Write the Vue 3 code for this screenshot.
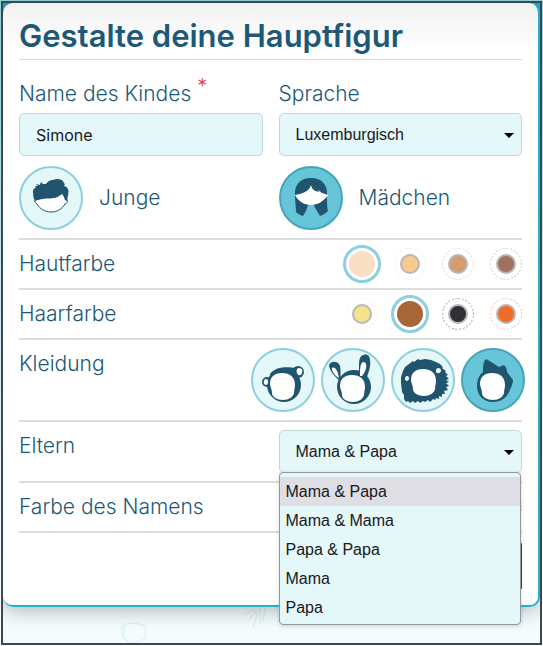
<script setup>
import { ref } from 'vue'

const childName = ref('Simone')
const language = ref('Luxemburgisch')
const figure = ref('girl')
const outfit = ref('flame')
const parents = ref('Mama & Papa')
const parentOptions = ['Mama & Papa', 'Mama & Mama', 'Papa & Papa', 'Mama', 'Papa']

const skin = ref('hell')
const hair = ref('braun')
const nameColor = ref('blau')

const skinColors = [
  { id: 'hell', color: '#f8dfc5' },
  { id: 'beige', color: '#f8ca8f' },
  { id: 'mittel', color: '#d59c71' },
  { id: 'dunkel', color: '#a0705e' }
]
const hairColors = [
  { id: 'blond', color: '#f5e38b' },
  { id: 'braun', color: '#a66635' },
  { id: 'schwarz', color: '#2e3036' },
  { id: 'rot', color: '#f16b29' }
]
const nameColors = [
  { id: 'blau', color: '#2a7fb8' },
  { id: 'gruen', color: '#6bb344' },
  { id: 'rot', color: '#f16b29' }
]

const face = 'M31 25C23 25 19 29 19 36C19 39 21 41 21 45C21 49 26 52 32 52C38 52 42 49 43 45C43 42 44 40 44 37C44 29 39 25 31 25z'
const outfits = [
  {
    id: 'monkey',
    label: 'Affe',
    dark: ['M16 37a17 17 0 0 1 34 0a17 17 0 0 1-34 0z', 'M41 24a6 6 0 0 1 12 0a6 6 0 0 1-12 0z', 'M11 34a5 5 0 0 1 10 0a5 5 0 0 1-10 0z', 'M19 26c6-8 18-7 25-6l4 10-28 4z'],
    light: 'M48 20c3 0 4 3 3 5-1 3-4 3-5 0-1-2 0-5 2-5zM15 31c2 0 2 2 2 3 0 2-1 3-2 3-3 0-3-6 0-6z',
    shift: ''
  },
  {
    id: 'bunny',
    label: 'Hase',
    dark: ['M16 39a17 17 0 0 1 34 0a17 17 0 0 1-34 0z', 'M19 33C14 29 8 22 8 17C9 13 17 12 19 18C20 22 19 27 20 31z', 'M37 26C39 21 37 15 39 10C41 5 49 5 49 12C50 18 48 23 46 29z'],
    light: 'M11 20C14 18 17 23 18 30C14 28 10 22 11 20zM39 28C39 22 39 15 42 14C47 13 46 23 41 28z',
    shift: 'translate(0 2)'
  },
  {
    id: 'lion',
    label: 'Löwe',
    dark: ['M10 35L10 29L12 23L14 19L18 16L22 13L23 14L27 11L29 12L34 11L40 12L45 14L49 16L52 19L51 20L55 23L54 24L57 27L55 28L58 31L55 32L58 34L55 35L58 38L55 39L57 42L53 43L54 46L51 46L51 49L48 48L48 51L45 50L44 52L42 51L39 54L37 52L34 54L32 53L29 55L27 53L24 55L22 53L19 55L17 53L15 54L13 51L13 47L11 44z'],
    light: 'M16 28c2 0 2 2 2 3-1 3-4 2-4 0 0-2 1-3 2-3zM47 20c2 0 3 1 3 3-1 3-5 3-5 0 0-2 1-3 2-3z',
    shift: 'translate(1 -4)'
  },
  {
    id: 'flame',
    label: 'Flamme',
    dark: ['M16 38c0-6 2-11 6-14 0-5 0-9 2-12 1-1 2-1 3 0l11 7 5-2c2 2 3 4 3 7l6 8c0 4-2 7-3 10-3 8-9 12-17 12-10 0-16-7-16-16z'],
    light: '',
    shift: ''
  }
]
</script>

<template>
  <div class="page">
    <main class="frame">
      <form class="card" @submit.prevent>
        <h1>Gestalte deine Hauptfigur</h1>

        <div class="columns fields">
          <div class="field">
            <label for="child-name">Name des Kindes <sup>*</sup></label>
            <input id="child-name" v-model="childName" class="control text" type="text" required />
          </div>
          <div class="field">
            <label for="language">Sprache</label>
            <div class="select-box">
              <select id="language" v-model="language" class="control">
                <option>Luxemburgisch</option>
                <option>Deutsch</option>
              </select>
              <svg class="arrow" viewBox="0 0 10 5" aria-hidden="true"><path d="M0 0h10L5 5z" /></svg>
            </div>
          </div>
        </div>

        <div class="columns figures">
          <label class="figure">
            <span class="badge" :class="{ chosen: figure === 'boy' }">
              <input v-model="figure" type="radio" name="figure" value="boy" />
              <svg viewBox="0 0 64 64" aria-hidden="true">
                <path class="face outline" d="M16 34c-1 2 1 3 2 4 3 5 8 8 14 8s11-3 14-8c2-1 3-2 2-4L44 25 20 28z" />
                <path class="dark" d="M16 35c-2-3-2-7-2-11l3-3-1-1 3 0-2-2 4 1 1-3 2 2 3 0c1-2 4-4 7-4 4-2 10-1 11 3 1 1 1 2 0 3 5 1 5 6 4 9l-1 6-2-1c-1-2-1-4-3-6-3 2-5 4-9 4-3 1-6 0-10 1-3 0-5 1-8 2z" />
              </svg>
            </span>
            <span>Junge</span>
          </label>
          <label class="figure">
            <span class="badge" :class="{ chosen: figure === 'girl' }">
              <input v-model="figure" type="radio" name="figure" value="girl" />
              <svg viewBox="0 0 64 64" aria-hidden="true">
                <path class="dark" d="M16 30c-1-11 5-18 16-18s17 7 16 18c0 7 0 11 1 15-2 2-5 4-8 5-2-4-5-7-6-11h-6c-1 4-3 8-5 11-3-1-5-2-7-4 0-5-1-10-1-16z" />
                <path class="face" d="M16 29c6-1 14-3 16-10 1 5 4 6 8 7l-1-2 4 3c2 1 4 1 6 2-4 6-10 10-17 10s-13-4-16-10z" />
                <path class="neck" d="M30 40h4c0 3 1 5 2 7h-7c1-2 1-4 1-7z" />
              </svg>
            </span>
            <span>Mädchen</span>
          </label>
        </div>

        <div class="row" role="radiogroup" aria-label="Hautfarbe">
          <span class="name">Hautfarbe</span>
          <div class="swatches">
            <label v-for="c in skinColors" :key="c.id" class="swatch" :class="{ chosen: skin === c.id }" :style="{ color: c.color }">
              <input v-model="skin" type="radio" name="skin" :value="c.id" :aria-label="c.id" />
            </label>
          </div>
        </div>

        <div class="row" role="radiogroup" aria-label="Haarfarbe">
          <span class="name">Haarfarbe</span>
          <div class="swatches">
            <label v-for="c in hairColors" :key="c.id" class="swatch" :class="{ chosen: hair === c.id }" :style="{ color: c.color }">
              <input v-model="hair" type="radio" name="hair" :value="c.id" :aria-label="c.id" />
            </label>
          </div>
        </div>

        <div class="row" role="radiogroup" aria-label="Kleidung">
          <span class="name">Kleidung</span>
          <div class="outfits">
            <label v-for="o in outfits" :key="o.id" class="badge" :class="{ chosen: outfit === o.id }">
              <input v-model="outfit" type="radio" name="outfit" :value="o.id" :aria-label="o.label" />
              <svg viewBox="0 0 64 64" aria-hidden="true">
                <path v-for="d in o.dark" :key="d" class="dark" :d="d" />
                <path class="face" :d="face" :transform="o.shift" />
                <path class="face" :d="o.light" />
              </svg>
            </label>
          </div>
        </div>

        <div class="row columns">
          <label class="name" for="parents">Eltern</label>
          <div class="select-box open">
            <select id="parents" v-model="parents" class="control">
              <option v-for="p in parentOptions" :key="p">{{ p }}</option>
            </select>
            <svg class="arrow" viewBox="0 0 10 5" aria-hidden="true"><path d="M0 0h10L5 5z" /></svg>
            <ul class="menu" role="listbox" aria-label="Eltern">
              <li
                v-for="p in parentOptions"
                :key="p"
                role="option"
                :aria-selected="parents === p"
                :class="{ active: parents === p }"
                @click="parents = p"
              >{{ p }}</li>
            </ul>
          </div>
        </div>

        <div class="row" role="radiogroup" aria-label="Farbe des Namens">
          <span class="name">Farbe des Namens</span>
          <div class="swatches">
            <label v-for="c in nameColors" :key="c.id" class="swatch" :class="{ chosen: nameColor === c.id }" :style="{ color: c.color }">
              <input v-model="nameColor" type="radio" name="name-color" :value="c.id" :aria-label="c.id" />
            </label>
          </div>
        </div>

        <div class="actions">
          <button type="submit" aria-label="Weiter"></button>
        </div>
      </form>

      <svg class="doodles" viewBox="0 0 537 36" preserveAspectRatio="xMinYMin slice" aria-hidden="true">
        <path d="M119 20c5-6 18-4 24 0v9c-3 5-9 7-15 6-7-1-11-8-9-15zM122 20c-3 6-2 12 3 14M242 7l10-5M245 14l9-11M250 20l5-15M257 1l0 16M262 2l-2 12" />
      </svg>
    </main>
  </div>
</template>

<style>
body {
  margin: 0;
}
</style>

<style scoped>
* {
  box-sizing: border-box;
}

.page {
  display: flex;
  min-height: 100vh;
  padding: 1px;
  background: linear-gradient(#8bd0d8, #e8f4f6 70%, #fff);
  color: #1d5877;
  font: 300 21px/26px Inter, "Open Sans", sans-serif;
}

.frame {
  flex: 1;
  min-width: 0;
  display: flex;
  flex-direction: column;
  overflow: hidden;
  border: 2px solid #3c4752;
  background: linear-gradient(#22abc9, #f4fcfe 80px);
}

.card {
  position: relative;
  padding: 0 16px 16px;
  border: solid #22b2cf;
  border-width: 0 2px 2px 0;
  border-radius: 10px;
  background: linear-gradient(#f1f1f1, #fff 48px);
  box-shadow: 0 4px 20px rgba(0, 0, 0, 0.28);
}

h1 {
  margin: 0;
  padding: 17px 0 7px;
  border-bottom: 1px solid #d8dadb;
  font-size: 31px;
  font-weight: 600;
  line-height: 32px;
}

.columns {
  display: grid;
  grid-template-columns: 1fr 1fr;
  column-gap: 16px;
}

.fields {
  padding: 21px 0 10px;
}

.field {
  display: grid;
  gap: 6px;
  min-width: 0;
}

sup {
  color: #e8324a;
  font-size: 20px;
  line-height: 0;
}

.control {
  appearance: none;
  display: block;
  width: 100%;
  height: 43px;
  margin: 0;
  padding: 0 16px;
  border: 1px solid #bed9dc;
  border-radius: 5px;
  outline: none;
  background: #e4f7f9;
  color: #17191c;
  font: 16px/20px "Liberation Sans", Arial, sans-serif;
}

.control.text {
  font-family: Inter, "Open Sans", sans-serif;
}

.select-box {
  position: relative;
  min-width: 0;
}

.arrow {
  position: absolute;
  top: 20px;
  right: 8px;
  width: 10px;
  height: 5px;
  fill: #000;
  pointer-events: none;
}

.menu {
  position: absolute;
  z-index: 2;
  top: 42px;
  left: 0;
  right: 1px;
  margin: 0;
  padding: 4px 0 2px;
  border: 1px solid #92999c;
  border-radius: 4px;
  background: #e4f7f9;
  box-shadow: 0 1px 4px rgba(0, 0, 0, 0.15);
  color: #17191c;
  font: 16px/29px "Liberation Sans", Arial, sans-serif;
  list-style: none;
}

.menu li {
  padding: 0 6px;
}

.menu .active {
  background: #e0dee5;
}

.figures {
  padding-bottom: 8px;
}

.figure {
  display: flex;
  align-items: center;
  gap: 16px;
}

.badge {
  display: grid;
  width: 64px;
  height: 64px;
  border: 2px solid #8dcfde;
  border-radius: 50%;
  background: #e4f7f9;
}

.badge.chosen {
  border-color: #46a5b5;
  background: #67c5d9;
}

.badge > * {
  grid-area: 1 / 1;
}

.badge input {
  appearance: none;
  margin: 0;
}

.badge svg {
  width: 64px;
  height: 64px;
  margin: -2px;
}

.dark {
  fill: #20546f;
}

.face {
  fill: #fff;
}

.outline {
  stroke: #20546f;
  stroke-width: 1;
}

.neck {
  fill: #67c5d9;
}

.row {
  border-top: 2px solid #dcdcdc;
}

.row:not(.columns) {
  display: flex;
  justify-content: space-between;
}

.name {
  padding: 11px 0;
}

.row.columns .select-box {
  margin: 8px 0;
}

.swatches {
  display: flex;
  align-items: center;
  gap: 16px;
}

.swatch {
  display: grid;
  place-items: center;
  width: 32px;
  height: 32px;
  border-radius: 50%;
  background: repeating-conic-gradient(color-mix(in srgb, currentColor 35%, white) 0 8deg, #fff 8deg 14deg);
}

.swatch::before {
  content: "";
  grid-area: 1 / 1;
  width: 30px;
  height: 30px;
  border-radius: 50%;
  background: #fff;
}

.swatch input {
  appearance: none;
  grid-area: 1 / 1;
  z-index: 1;
  width: 20px;
  height: 20px;
  margin: 0;
  border: 2px solid #b7b7b7;
  border-radius: 50%;
  background: currentColor;
  color: inherit;
}

.swatch.chosen {
  width: 38px;
  height: 38px;
  margin: 0 -3px;
  border: 3px solid #8dcfde;
  background: #fff;
}

.swatch.chosen input {
  width: 26px;
  height: 26px;
  border: 0;
}

.outfits {
  display: flex;
  gap: 6px;
  margin-right: -3px;
  padding: 8px 0;
}

.actions {
  display: flex;
  justify-content: flex-end;
  padding-top: 10px;
  border-top: 2px solid #dcdcdc;
}

button {
  width: 160px;
  height: 46px;
  border: 0;
  border-radius: 1px;
  background: #20546f;
}

.doodles {
  width: 100%;
  height: 36px;
  fill: none;
  stroke: #d3f1f4;
  stroke-width: 1;
}
</style>
